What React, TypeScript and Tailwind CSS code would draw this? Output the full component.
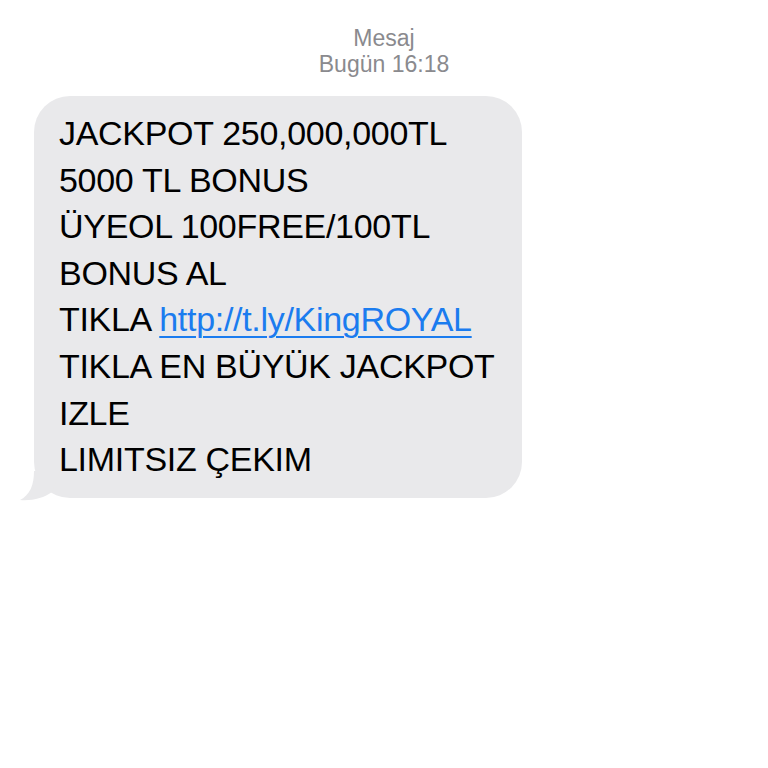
import React from 'react';

const lines: React.ReactNode[] = [
  'JACKPOT 250,000,000TL',
  '5000 TL BONUS',
  'ÜYEOL 100FREE/100TL',
  'BONUS AL',
  <>
    TIKLA{' '}
    <span className="text-[#1b7cef] underline decoration-[2px] underline-offset-[5px]">http://t.ly/KingROYAL</span>
  </>,
  'TIKLA EN BÜYÜK JACKPOT',
  'IZLE',
  'LIMITSIZ ÇEKIM',
];

export default function App() {
  return (
    <div className="w-[768px] h-[768px] bg-white font-['Liberation_Sans',Arial,sans-serif]">
      {/* başlık */}
      <div className="flex flex-col items-center pt-[25px] text-[#8a8a8e] text-[23px] leading-[26px]">
        <span>Mesaj</span>
        <span>Bugün 16:18</span>
      </div>

      {/* mesaj balonu */}
      <div className="relative ml-[34px] mt-[19px] w-[488px]">
        <div className="rounded-[36px] bg-[#e9e9eb] pl-[25px] pr-[20px] pt-[14px] pb-[15px] text-black text-[34px] leading-[46.6px] tracking-[-0.3px]">
          {lines.map((line, i) => (
            <div key={i} className="whitespace-nowrap">{line}</div>
          ))}
        </div>
        <svg className="absolute left-[-14px] bottom-[-3px]" width="40" height="30" viewBox="0 0 40 30">
          <path d="M40 0 L14 0 C14 14 10 24 0 29 C12 30 24 27 32 21 Z" fill="#e9e9eb" />
        </svg>
      </div>
    </div>
  );
}
